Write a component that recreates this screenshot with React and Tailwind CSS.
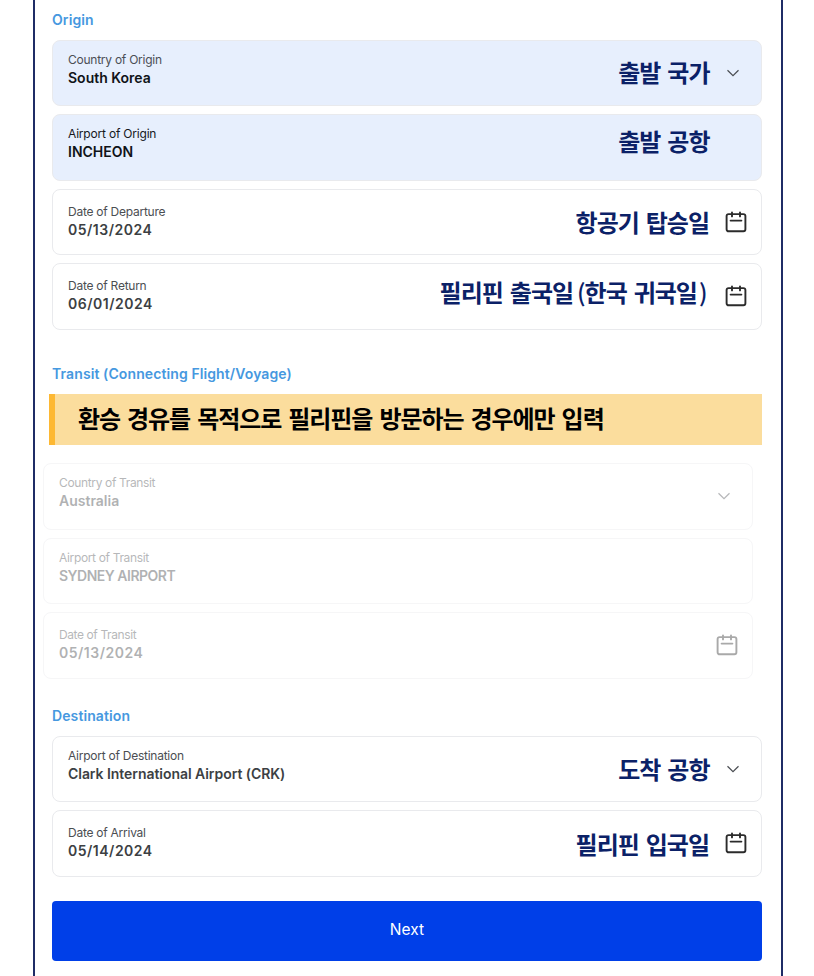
const origin = [
  { label: 'Country of Origin', value: 'South Korea', note: '출발 국가', icon: 'chevron', filled: true, noteStyle: 'top-[-1px] left-[0.5px]', tone: 'text-[#4b4e55]' },
  { label: 'Airport of Origin', value: 'INCHEON', note: '출발 공항', filled: true, noteStyle: 'top-[-6px] left-[0.5px]', tone: 'text-[#16181c]', labelStyle: 'tracking-[-0.2px]' },
  { label: 'Date of Departure', value: '05/13/2024', note: '항공기 탑승일', icon: 'calendar', noteStyle: '' },
  { label: 'Date of Return', value: '06/01/2024', note: '필리핀 출국일', noteExtra: '한국 귀국일', icon: 'calendar', noteStyle: 'top-[-4px] right-[2.5px]' },
];

const transit = [
  { label: 'Country of Transit', value: 'Australia', icon: 'chevron', labelStyle: 'tracking-[-0.35px]' },
  { label: 'Airport of Transit', value: 'SYDNEY AIRPORT', labelStyle: 'tracking-[-0.35px]', valueStyle: 'tracking-[-0.5px]' },
  { label: 'Date of Transit', value: '05/13/2024', icon: 'calendar', labelStyle: 'tracking-[-0.4px]' },
];

const destination = [
  { label: 'Airport of Destination', value: 'Clark International Airport (CRK)', note: '도착 공항', icon: 'chevron', noteStyle: 'left-[0.5px]', valueStyle: 'tracking-[-0.05px]' },
  { label: 'Date of Arrival', value: '05/14/2024', note: '필리핀 입국일', icon: 'calendar', noteStyle: 'top-[1px]' },
];

function Calendar() {
  return (
    <svg className="relative left-[1.5px]" width="22" height="22" viewBox="0 0 22 22" fill="none" stroke="#2b2b2b" strokeWidth="1.9" strokeLinecap="round">
      <rect x="1.6" y="3.1" width="18.8" height="17.2" rx="2" />
      <path d="M7 1.4v4M15 1.4v4M5.6 9.6h10.8" />
    </svg>
  );
}

function Chevron() {
  return (
    <svg className="relative right-[1px]" width="14" height="8" viewBox="0 0 14 8" fill="none" stroke="#4a4d52" strokeWidth="1.2">
      <path d="M1.5 1.2L7 6.6L12.5 1.2" />
    </svg>
  );
}

function Field({ field }) {
  const isDate = field.icon === 'calendar';

  return (
    <div className={`flex h-[66.5px] justify-between rounded-lg border border-[#e9eaed] pl-[15px] ${field.filled ? 'bg-[#e7effd]' : 'bg-white'}`}>
      <div className={isDate ? 'pt-[13px]' : 'pt-[10px]'}>
        <div className={`text-[12px] leading-[18px] whitespace-nowrap ${field.labelStyle ?? 'tracking-[-0.25px]'} ${field.tone ?? 'text-[#4b4e52]'}`}>
          {field.label}
        </div>
        <div className={`text-[14px] font-semibold whitespace-nowrap ${isDate ? 'leading-[18px] tracking-[0.5px]' : 'leading-[17px]'} ${field.valueStyle ?? ''} ${field.filled ? 'text-[#101318]' : 'text-[#3c3f43]'}`}>
          {field.value}
        </div>
      </div>
      <div className="flex items-center">
        {field.note ? (
          <span className={`relative text-[24px] leading-[30px] font-bold tracking-[-1px] [word-spacing:2.5px] whitespace-nowrap text-[#0b2167] font-['Noto_Sans_CJK_KR',sans-serif] ${field.noteStyle}`}>
            {field.note}
            {field.noteExtra ? (
              <>
                <span className="ml-[4px] font-medium">(</span>
                {field.noteExtra}
                <span className="ml-[2px] font-medium">)</span>
              </>
            ) : null}
          </span>
        ) : null}
        <span className="flex w-[52px] justify-center pr-[2px]">
          {field.icon === 'chevron' ? <Chevron /> : null}
          {isDate ? <Calendar /> : null}
        </span>
      </div>
    </div>
  );
}

function FieldList({ fields }) {
  return (
    <div className="flex flex-col gap-2">
      {fields.map((field) => (
        <Field key={field.label} field={field} />
      ))}
    </div>
  );
}

function Heading({ children }) {
  return <h2 className="text-[14px] leading-[20px] font-semibold tracking-[0.1px] text-[#4698e0]">{children}</h2>;
}

export default function App() {
  return (
    <div className="h-[976px] w-[814px] overflow-hidden bg-white pl-[33px] font-['Inter',sans-serif]">
      <main className="h-full w-[750px] border-x-2 border-[#1f2c66] px-[17px] pt-[10px]">
        <section className="mr-[2px]">
          <Heading>Origin</Heading>
          <div className="mt-[9.5px]">
            <FieldList fields={origin} />
          </div>
        </section>

        <section className="mt-[34px] mr-[2px]">
          <Heading>Transit (Connecting Flight/Voyage)</Heading>
          <div className="mt-[10.5px] -ml-[3px] flex h-[51px] items-center border-l-[6px] border-[#fdb833] bg-[#fbdd9d] pb-[3px] pl-[23px]">
            <p className="text-[24px] leading-[30px] font-bold tracking-[-1.05px] [word-spacing:2.6px] text-black font-['Noto_Sans_CJK_KR',sans-serif]">
              환승 경유를 목적으로 필리핀을 방문하는 경우에만 입력
            </p>
          </div>
          <div className="mt-[18px] mr-[9px] -ml-[9px] opacity-40">
            <FieldList fields={transit} />
          </div>
        </section>

        <section className="mt-[27px] mr-[2px]">
          <Heading>Destination</Heading>
          <div className="mt-[10px]">
            <FieldList fields={destination} />
          </div>
        </section>

        <button className="mt-6 mr-[2px] block h-[60px] w-[710px] rounded-[4px] bg-[#003fe8] pb-[2px] text-[15.5px] tracking-[0.1px] text-white">
          Next
        </button>
      </main>
    </div>
  );
}
